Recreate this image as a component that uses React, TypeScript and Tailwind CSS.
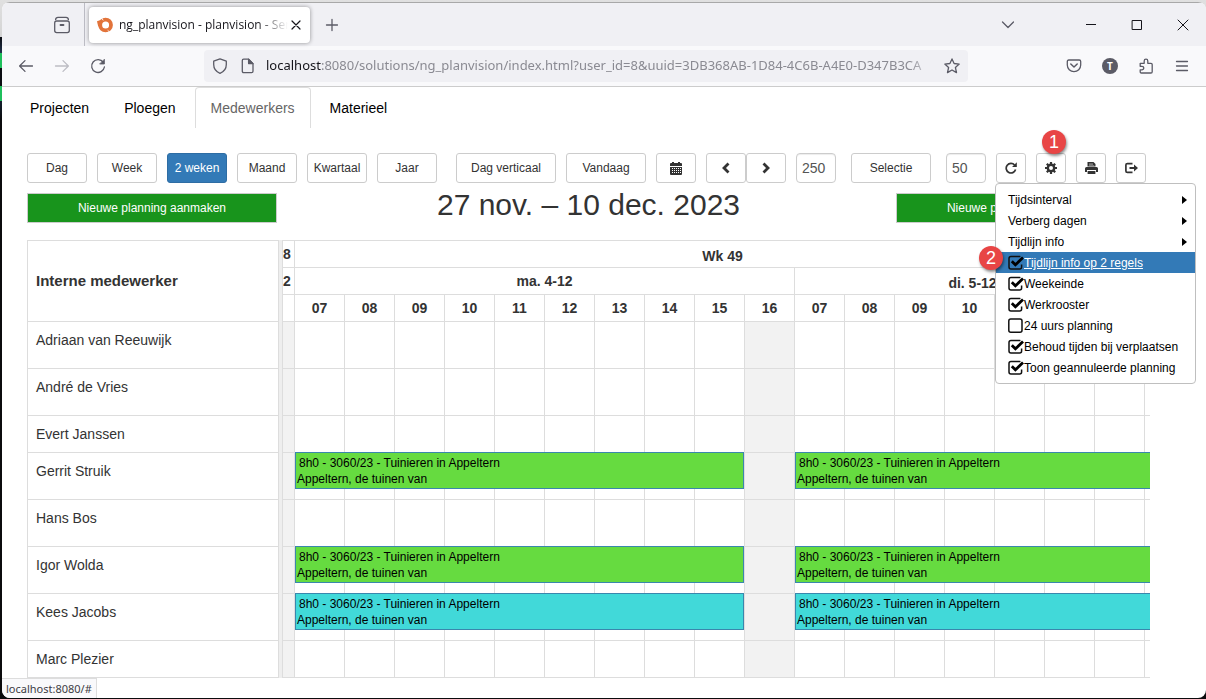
import React from "react";

const uiFont = "font-['Open_Sans','Noto_Sans',sans-serif]";
const wideUiFont = "font-['Noto_Sans','Open_Sans',sans-serif]";
const pageFont = "font-['Liberation_Sans',Arial,sans-serif]";

type IconProps = { children: React.ReactNode; className?: string; box?: string };

function Icon({ children, className = "size-4", box = "0 0 16 16" }: IconProps) {
  return (
    <svg viewBox={box} className={`shrink-0 ${className}`} fill="none" stroke="currentColor" strokeWidth="1.3" strokeLinecap="round" strokeLinejoin="round" aria-hidden="true">
      {children}
    </svg>
  );
}

function ChromeButton({ label, children, className = "" }: { label: string; children: React.ReactNode; className?: string }) {
  return (
    <button type="button" aria-label={label} className={`flex h-8 w-9 shrink-0 items-center justify-center ${className}`}>
      {children}
    </button>
  );
}

function TitleBar() {
  return (
    <div className="flex h-[43px] items-center bg-[#f0f0f4] text-[#5b5b66]">
      <div className="flex h-full w-[83px] shrink-0 items-center justify-end border-r border-[#bcbcc4] pr-1">
        <ChromeButton label="Recente vensters">
          <Icon className="size-[18px]" box="0 0 18 18">
            <rect x="1.7" y="5" width="14.6" height="11.6" rx="2" />
            <path d="M2.6 3.6 Q2.8 1.4 5 1.4 H13 Q15.2 1.4 15.4 3.6" />
            <path d="M7.5 9 H10.5" strokeWidth="1.8" />
          </Icon>
        </ChromeButton>
      </div>
      <div className="ml-1 flex h-9 w-[221px] shrink-0 items-center rounded bg-white pl-2 pr-2 shadow-[0_0_4px_rgba(0,0,0,0.4)]">
        <svg viewBox="0 0 16 16" className="size-4 shrink-0" aria-hidden="true">
          <circle cx="8.6" cy="8" r="5.4" fill="none" stroke="#e2733a" strokeWidth="3.8" />
          <path d="M0 4.2 L3.6 3 L4 9 L1.2 9.5 Z" fill="#e2733a" />
          <path d="M4.4 0.6 L6.2 3.4" stroke="#fff" strokeWidth="0.9" />
          <path d="M12 15.4 L10.8 12.8" stroke="#fff" strokeWidth="0.6" />
        </svg>
        <span className="ml-[6px] min-w-0 flex-1 overflow-hidden whitespace-nowrap text-xs text-[#15141a] [mask-image:linear-gradient(to_right,#000_82%,transparent)]">
          ng_planvision - planvision - Servoy
        </span>
        <button type="button" aria-label="Tabblad sluiten" className="ml-[2px] text-[#15141a]">
          <Icon className="size-3" box="0 0 12 12">
            <path d="M2 2 L10 10 M10 2 L2 10" strokeWidth="1.2" />
          </Icon>
        </button>
      </div>
      <ChromeButton label="Nieuw tabblad" className="ml-1">
        <Icon className="size-4"><path d="M8 2.5 V13.5 M2.5 8 H13.5" /></Icon>
      </ChromeButton>
      <div className="flex-1" />
      <ChromeButton label="Alle tabbladen" className="mr-[47px]">
        <Icon className="size-4"><path d="M2.5 5 L8 10.5 L13.5 5" /></Icon>
      </ChromeButton>
      <div className="flex items-center gap-[10px] pr-[5px] text-[#15141a]">
        <ChromeButton label="Minimaliseren">
          <Icon className="size-4"><path d="M3 7.5 H13" strokeWidth="1" strokeLinecap="butt" /></Icon>
        </ChromeButton>
        <ChromeButton label="Maximaliseren">
          <Icon className="size-4"><rect x="3.5" y="3.5" width="9" height="9" strokeWidth="1" /></Icon>
        </ChromeButton>
        <ChromeButton label="Sluiten">
          <Icon className="size-4"><path d="M3 3 L13 13 M13 3 L3 13" strokeWidth="1" /></Icon>
        </ChromeButton>
      </div>
    </div>
  );
}

function NavBar() {
  return (
    <div className="flex h-[41px] items-center border-b border-[#cccccc] bg-[#f9f9fb] pl-[6px] pr-[6px] text-[#5b5b66]">
      <ChromeButton label="Vorige">
        <Icon><path d="M14.5 8 H1.8 M7 2.6 L1.6 8 L7 13.4" /></Icon>
      </ChromeButton>
      <ChromeButton label="Volgende" className="text-[#bdbdc4]">
        <Icon><path d="M1.5 8 H14.2 M9 2.6 L14.4 8 L9 13.4" /></Icon>
      </ChromeButton>
      <ChromeButton label="Vernieuwen">
        <Icon>
          <path d="M13.3 4.4 A6.4 6.4 0 1 0 14.4 9" />
          <path d="M14.4 1.6 V6 H10 Z" fill="currentColor" strokeWidth="0.8" />
        </Icon>
      </ChromeButton>
      <div className="ml-[88px] flex h-8 w-[764px] min-w-0 items-center rounded bg-[#f0f0f4] pl-2 pr-2">
        <Icon><path d="M8 0.9 L14.3 3.2 V6.5 C14.3 10.8 11.8 13.8 8 15.3 C4.2 13.8 1.7 10.8 1.7 6.5 V3.2 Z" /></Icon>
        <Icon className="ml-3 size-4">
          <path d="M3.7 1.2 H8.5 L13 5.6 V13.2 Q13 14.6 11.6 14.6 H3.7 Q2.3 14.6 2.3 13.2 V2.6 Q2.3 1.2 3.7 1.2 Z" />
          <path d="M8.6 1.2 L13 5.6 H8.6 Z" fill="currentColor" />
        </Icon>
        <div className={`ml-[10px] min-w-0 flex-1 overflow-hidden whitespace-nowrap text-[13px] text-[#8a8a92] [mask-image:linear-gradient(to_right,#000_96%,transparent)] ${wideUiFont}`}>
          <span className="text-[#15141a]">localhost</span>:8080/solutions/ng_planvision/index.html?user_id=8&amp;uuid=3DB368AB-1D84-4C6B-A4E0-D347B3CA
        </div>
        <button type="button" aria-label="Bladwijzer" className="ml-2">
          <Icon><path d="M8 0.9 L10.1 5.5 L15.2 6.1 L11.4 9.5 L12.5 14.6 L8 12 L3.5 14.6 L4.6 9.5 L0.8 6.1 L5.9 5.5 Z" /></Icon>
        </button>
      </div>
      <div className="flex-1" />
      <ChromeButton label="Pocket">
        <Icon>
          <path d="M2.8 2 H13.2 Q14.7 2 14.7 3.5 V7 A6.7 6.7 0 0 1 1.3 7 V3.5 Q1.3 2 2.8 2 Z" />
          <path d="M4.8 6 L8 9 L11.2 6" strokeWidth="1.5" />
        </Icon>
      </ChromeButton>
      <ChromeButton label="Account">
        <span className="flex size-4 items-center justify-center rounded-full bg-[#5b5b66] text-[10px] leading-none font-bold text-white">T</span>
      </ChromeButton>
      <ChromeButton label="Extensies">
        <Icon>
          <path d="M2.2 5.3 H6.2 V3 A1.8 1.8 0 0 1 9.8 3 V5.3 H13 Q14.2 5.3 14.2 6.5 V13.8 Q14.2 15 13 15 H3.4 Q2.2 15 2.2 13.8 V11.8 H4 A1.7 1.7 0 0 0 4 8.3 H2.2 Z" />
        </Icon>
      </ChromeButton>
      <ChromeButton label="Menu">
        <Icon><path d="M2.5 3.5 H13.5 M2.5 8 H13.5 M2.5 12.5 H13.5" /></Icon>
      </ChromeButton>
    </div>
  );
}

const tabs = ["Projecten", "Ploegen", "Medewerkers", "Materieel"];

function Tabs() {
  return (
    <nav className="flex gap-[3px] pl-[12px] text-sm leading-5">
      {tabs.map((tab) => (
        <a
          key={tab}
          href="#"
          className={
            tab === "Medewerkers"
              ? "rounded-t border border-b-0 border-[#dddddd] px-[15px] py-[10px] text-[#666666]"
              : "border border-b-0 border-transparent px-[15px] py-[10px] text-black"
          }
        >
          {tab}
        </a>
      ))}
    </nav>
  );
}

const control = "flex h-[30px] shrink-0 items-center justify-center rounded-[3px] border text-xs";
const plain = "border-[#cccccc] bg-white text-[#333333]";
const active = "border-[#2e6da4] bg-[#337ab7] text-white";
const field = "h-[30px] w-10 shrink-0 rounded border border-[#cccccc] bg-white px-[5px] text-sm text-[#555555] shadow-[inset_0_1px_1px_rgba(0,0,0,0.075)]";

function ToolButton({ width, label, on, className = "", children }: { width: string; label?: string; on?: boolean; className?: string; children: React.ReactNode }) {
  return (
    <button type="button" aria-label={label} className={`${control} ${on ? active : plain} ${width} ${className}`}>
      {children}
    </button>
  );
}

function Badge({ n, className }: { n: number; className: string }) {
  return (
    <span className={`absolute z-20 flex size-6 items-center justify-center rounded-full bg-[#e84545] text-lg leading-none text-white shadow-[1px_2px_3px_rgba(0,0,0,0.45)] ${className}`}>
      {n}
    </span>
  );
}

function Toolbar() {
  return (
    <div className="flex items-center gap-[10px]">
      <ToolButton width="w-[60px]">Dag</ToolButton>
      <ToolButton width="w-[60px]">Week</ToolButton>
      <ToolButton width="w-[60px]" on>2 weken</ToolButton>
      <ToolButton width="w-[60px]">Maand</ToolButton>
      <ToolButton width="w-[60px]">Kwartaal</ToolButton>
      <ToolButton width="w-[60px]">Jaar</ToolButton>
      <ToolButton width="w-[100px]" className="ml-[9px]">Dag verticaal</ToolButton>
      <ToolButton width="w-[80px]">Vandaag</ToolButton>
      <ToolButton width="w-10" label="Kalender">
        <svg viewBox="0 0 12 13" className="h-[13px] w-3" aria-hidden="true">
          <path d="M0 2 Q0 1 1 1 H2 V0 H4 V1 H8 V0 H10 V1 H11 Q12 1 12 2 V4 H0 Z" fill="#333" />
          <path d="M0 5 H12 V12 Q12 13 11 13 H1 Q0 13 0 12 Z" fill="#333" />
          <path d="M2 6.5 H11 M2 8.5 H11 M2 10.5 H11" stroke="#fff" strokeDasharray="1 1" fill="none" />
        </svg>
      </ToolButton>
      <div className="flex">
        <ToolButton width="w-10" label="Vorige periode">
          <svg viewBox="0 0 12 12" className="size-3" aria-hidden="true"><path d="M8.5 1.5 L4 6 L8.5 10.5" fill="none" stroke="#333" strokeWidth="2.8" /></svg>
        </ToolButton>
        <ToolButton width="w-10" label="Volgende periode">
          <svg viewBox="0 0 12 12" className="size-3" aria-hidden="true"><path d="M3.5 1.5 L8 6 L3.5 10.5" fill="none" stroke="#333" strokeWidth="2.8" /></svg>
        </ToolButton>
      </div>
      <input aria-label="Breedte" defaultValue="250" className={field} />
      <ToolButton width="w-[80px]" className="ml-[5px]">Selectie</ToolButton>
      <input aria-label="Hoogte" defaultValue="50" className={`${field} ml-[5px]`} />
      <ToolButton width="w-[30px]" label="Verversen">
        <svg viewBox="0 0 12 12" className="size-3" aria-hidden="true">
          <path d="M9.6 3 A4.8 4.8 0 1 0 10.6 7.6" fill="none" stroke="#333" strokeWidth="1.7" />
          <path d="M11.8 0.3 V5 H7.1 Z" fill="#333" />
        </svg>
      </ToolButton>
      <div className="relative">
        <ToolButton width="w-[30px]" label="Instellingen">
          <svg viewBox="0 0 12 12" className="size-3" aria-hidden="true">
            <circle cx="6" cy="6" r="3.2" fill="none" stroke="#333" strokeWidth="2.4" />
            <path d="M6 0 V2.4 M6 9.6 V12 M0 6 H2.4 M9.6 6 H12 M1.8 1.8 L3.4 3.4 M8.6 8.6 L10.2 10.2 M1.8 10.2 L3.4 8.6 M8.6 3.4 L10.2 1.8" stroke="#333" strokeWidth="2.2" />
          </svg>
        </ToolButton>
        <Badge n={1} className="-top-[23px] left-[6px]" />
        <SettingsMenu />
      </div>
      <ToolButton width="w-[30px]" label="Afdrukken">
        <svg viewBox="0 0 13 12" className="h-3 w-[13px]" fill="#333" aria-hidden="true">
          <path d="M2.5 0 H8.5 L10.5 2 V4.5 H2.5 Z" />
          <path d="M1.5 5 H11.5 Q13 5 13 6.5 V10 H11 V8 H2 V10 H0 V6.5 Q0 5 1.5 5 Z" />
          <rect x="2.6" y="9" width="7.8" height="3" />
          <path d="M4 1.2 H8 V3 H9.2 V4 H4 Z" fill="#777" />
        </svg>
      </ToolButton>
      <ToolButton width="w-[30px]" label="Exporteren">
        <svg viewBox="0 0 13 12" className="h-3 w-[13px]" aria-hidden="true">
          <path d="M7.5 1.6 H2.4 Q0.9 1.6 0.9 3.1 V8.9 Q0.9 10.4 2.4 10.4 H7.5" fill="none" stroke="#333" strokeWidth="1.7" />
          <path d="M4.5 5 H9 V2.6 L13 6 L9 9.4 V7 H4.5 Z" fill="#333" />
        </svg>
      </ToolButton>
    </div>
  );
}

const submenus = ["Tijdsinterval", "Verberg dagen", "Tijdlijn info"];
const toggles = [
  { label: "Tijdlijn info op 2 regels", on: true, hover: true },
  { label: "Weekeinde", on: true },
  { label: "Werkrooster", on: true },
  { label: "24 uurs planning", on: false },
  { label: "Behoud tijden bij verplaatsen", on: true },
  { label: "Toon geannuleerde planning", on: true },
];

function SettingsMenu() {
  return (
    <div className="absolute -left-[41px] top-[30px] z-10 w-[201px] rounded border border-[#bfbfbf] bg-white py-[5px] text-xs leading-[19px] text-black">
      {submenus.map((label) => (
        <button key={label} type="button" className="flex h-[21px] w-full items-center justify-between pl-3 pr-2">
          <span className="pt-[2px]">{label}</span>
          <svg viewBox="0 0 4 8" className="h-2 w-[5px]" preserveAspectRatio="none" aria-hidden="true"><path d="M0 0 L4 4 L0 8 Z" fill="#000" /></svg>
        </button>
      ))}
      {toggles.map((t) => (
        <label
          key={t.label}
          className={t.hover ? "flex h-[21px] items-center whitespace-nowrap bg-[#337ab7] pl-3 text-white underline" : "flex h-[21px] items-center whitespace-nowrap pl-3"}
        >
          <span className="grid shrink-0">
            <input type="checkbox" defaultChecked={t.on} className="peer col-start-1 row-start-1 size-4 appearance-none" />
            <svg viewBox="0 0 16 16" className="pointer-events-none col-start-1 row-start-1 size-4 peer-checked:hidden" aria-hidden="true">
              <rect x="0.8" y="1" width="13.2" height="13.2" rx="2" fill="none" stroke="#111" strokeWidth="1.5" />
            </svg>
            <svg viewBox="0 0 16 16" className="pointer-events-none col-start-1 row-start-1 hidden size-4 peer-checked:block" fill="none" aria-hidden="true">
              <path d="M12.4 1.6 Q12.2 1.5 11.6 1.5 H3 Q1 1.5 1 3.5 V12 Q1 14 3 14 H11.6 Q13.6 14 13.6 12 V9.5" stroke="#111" strokeWidth="1.5" />
              <path d="M3.8 6.2 L7.4 9.8 L15 2.6" stroke="#000" strokeWidth="2.8" />
            </svg>
          </span>
          <span className="pt-[2px]">{t.label}</span>
        </label>
      ))}
      <Badge n={2} className="-left-[17px] top-[62px]" />
    </div>
  );
}

type Kind = "green" | "cyan";
const workers: { name: string; low?: boolean; plan?: Kind }[] = [
  { name: "Adriaan van Reeuwijk" },
  { name: "André de Vries" },
  { name: "Evert Janssen", low: true },
  { name: "Gerrit Struik", plan: "green" },
  { name: "Hans Bos" },
  { name: "Igor Wolda", plan: "green" },
  { name: "Kees Jacobs", plan: "cyan" },
  { name: "Marc Plezier", low: true },
];
const hours = ["07", "08", "09", "10", "11", "12", "13", "14", "15", "16", "07", "08", "09", "10", "11", "12", "13"];

function Planned({ kind }: { kind: Kind }) {
  return (
    <div
      className={`absolute -top-px left-0 z-[1] h-[37px] w-[449px] border border-[#3a87ad] pl-px pt-[2px] text-xs leading-[16px] text-black ${
        kind === "green" ? "bg-[#66db40]" : "bg-[#41d9d9]"
      }`}
    >
      <div className="pl-[2px]">8h0 - 3060/23 - Tuinieren in Appeltern</div>
      <div>Appeltern, de tuinen van</div>
    </div>
  );
}

const line = "border-[#dddddd]";
const head = `h-[27px] overflow-hidden border-b border-r p-0 whitespace-nowrap ${line}`;

function Planning() {
  return (
    <div className="flex text-sm leading-5 text-[#333333]">
      <table className={`w-[252px] shrink-0 table-fixed border-separate border-spacing-0 border-l border-t ${line}`}>
        <thead>
          <tr>
            <th className={`h-[81px] border-b border-r px-2 py-0 text-left text-[15px] ${line}`}>Interne medewerker</th>
          </tr>
        </thead>
        <tbody>
          {workers.map((w) => (
            <tr key={w.name}>
              <td className={`${w.low ? "h-[37px]" : "h-[47px]"} border-b border-r px-2 pt-2 pb-0 align-top ${line}`}>{w.name}</td>
            </tr>
          ))}
        </tbody>
      </table>
      <div className="w-[3px] shrink-0 bg-[#eeeeee]" />
      <div className={`min-w-0 flex-1 overflow-hidden border-l border-t ${line}`}>
        <table className="w-full table-fixed border-separate border-spacing-0">
          <colgroup>
            <col className="w-3" />
            {hours.map((_, i) => (
              <col key={i} className="w-[50px]" />
            ))}
            <col />
          </colgroup>
          <thead>
            <tr>
              <th className={`${head} text-left`}>8</th>
              <th colSpan={18} className={`${head} border-r-0 pt-1`}>Wk 49</th>
            </tr>
            <tr>
              <th className={`${head} text-left`}>2</th>
              <th colSpan={10} className={head}>ma. 4-12</th>
              <th colSpan={8} className={`${head} border-r-0 pt-1`}>di. 5-12</th>
            </tr>
            <tr>
              <th className={head} />
              {hours.map((h, i) => (
                <th key={i} className={head}>{h}</th>
              ))}
              <th className={`${head} border-r-0`} />
            </tr>
          </thead>
          <tbody>
            {workers.map((w) => (
              <tr key={w.name} className={w.low ? "h-[37px]" : "h-[47px]"}>
                <td className={`border-b border-r bg-[#f2f2f2] p-0 ${line}`} />
                {hours.map((_, i) => (
                  <td key={i} className={`relative border-b border-r p-0 ${i === 9 ? "bg-[#f2f2f2]" : ""} ${line}`}>
                    {w.plan && (i === 0 || i === 10) ? <Planned kind={w.plan} /> : null}
                  </td>
                ))}
                <td className={`border-b p-0 ${line}`} />
              </tr>
            ))}
          </tbody>
        </table>
      </div>
    </div>
  );
}

const create = "h-[30px] w-[250px] shrink-0 border border-[#cccccc] bg-[#18941c] text-xs text-white";

export default function App() {
  return (
    <div className="flex min-h-screen flex-col bg-[linear-gradient(to_bottom,#e0e0e0_0,#d4d4d4_37px,#0b0d12_37px,#22334d_53px,#1fbf5c_53px,#1fbf5c_68px,#0b0d12_68px,#0b0d12_86px,#1fbf5c_86px,#1fbf5c_101px,#14202f_101px,#0b0b0d_120px)] pt-[2px] pb-px pl-[2px]">
      <div className={`relative flex flex-1 flex-col overflow-hidden rounded-lg bg-white ${pageFont}`}>
        <header className={`border-t border-[#a8a8a8] ${uiFont}`}>
          <TitleBar />
          <NavBar />
        </header>
        <Tabs />
        <main className="flex flex-1 flex-col pt-[25px] pr-14 pb-[20px] pl-[25px]">
          <Toolbar />
          <div className="mt-[10px] mb-[17px] flex items-start pr-1">
            <button type="button" className={create}>Nieuwe planning aanmaken</button>
            <h1 className="flex-1 pl-1 text-center text-[30px] leading-6 whitespace-nowrap text-[#333333]">27 nov. – 10 dec. 2023</h1>
            <button type="button" className={create}>Nieuwe planning aanmaken</button>
          </div>
          <Planning />
        </main>
        <div className={`absolute bottom-0 left-0 h-[20px] border-t border-r border-[#dddddd] bg-[#f9f9fb] px-1 text-[11px] leading-[19px] text-[#3d3d45] ${wideUiFont}`}>
          localhost:8080/#
        </div>
      </div>
    </div>
  );
}
